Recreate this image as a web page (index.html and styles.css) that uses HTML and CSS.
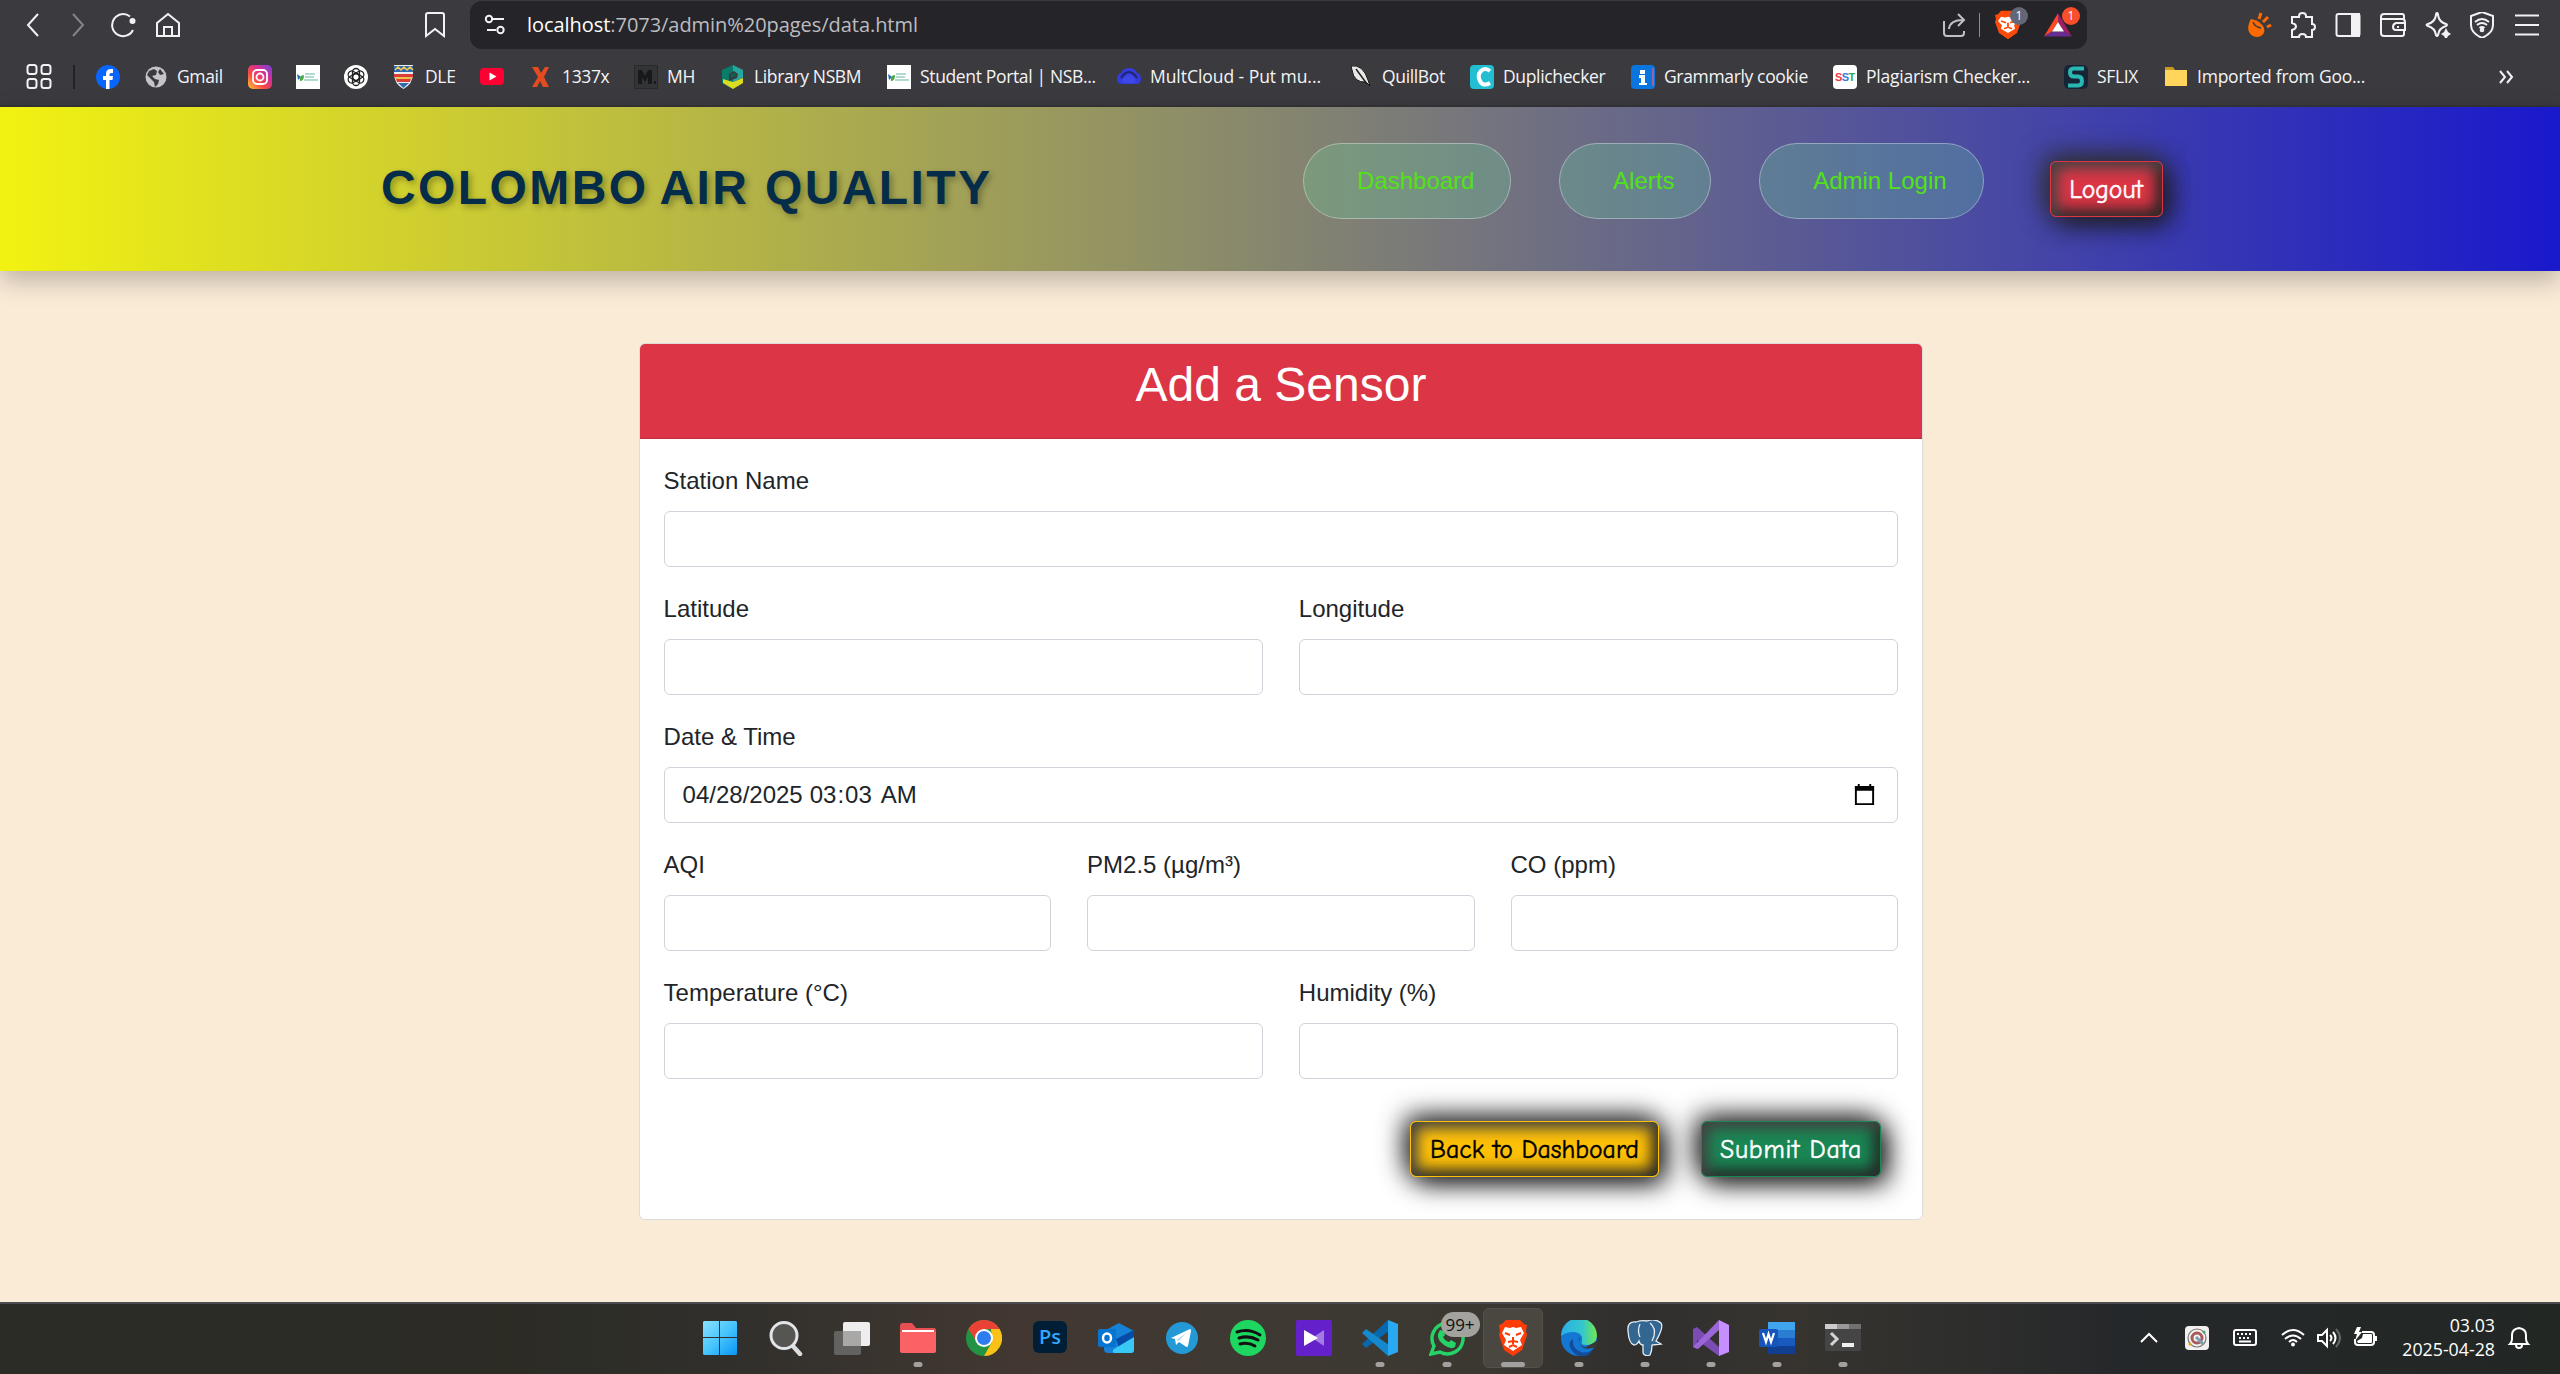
FILE: index.html
```html
<!DOCTYPE html>
<html lang="en">
<head>
<meta charset="utf-8">
<title>Add a Sensor</title>
<link rel="stylesheet" href="styles.css">
</head>
<body>
<div class="browser">
  <div class="toolbar">
    <svg class="ic" viewBox="0 0 26 26"><path d="M18 2 8 13l10 11"/></svg>
    <svg class="ic dim" viewBox="0 0 26 26"><path d="m8 2 10 11L8 24"/></svg>
    <svg class="ic" viewBox="0 0 26 26"><path d="M20 4.500A11 11 0 1 0 23 18"/><circle cx="22.500" cy="9" r="3" fill="#f2f2f5" stroke="none"/></svg>
    <svg class="ic" viewBox="0 0 26 26"><path d="M2 11 13 2l11 9v13H2zM9 24v-9h8v9"/></svg>
    <svg class="ic" viewBox="0 0 26 26"><path d="M4 3q0-2 2-2h14q2 0 2 2v21l-9-7-9 7z"/></svg>
    <div class="address">
      <svg class="ic" viewBox="0 0 26 26"><circle cx="7" cy="7" r="3.200"/><path d="M10.500 7H22M5 18h9"/><circle cx="18.500" cy="18" r="3.200"/></svg>
      <div class="url">localhost<span>:7073/admin%20pages/data.html</span></div>
      <svg class="ic share" viewBox="0 0 26 26"><path d="M2 9v12q0 3 3 3h14q3 0 3-3v-2M7 17q1-9 14-9M16 2l6 6-6 6"/></svg>
      <i class="rule"></i>
      <div class="badged"><svg class="big" preserveAspectRatio="none" viewBox="0 0 30 36"><path fill="#fb4a0a" d="m8 2 14 0 3 4 3 1-1 5 1 3-4 13-9 7-9-7L2 15l1-3-1-5 3-1z"/><path fill="#fff" d="m8 9 4 1 3-1 3 1 4-1 3 5-4 5 1 4-7 5-7-5 1-4-4-5z"/><path d="m8 14 5 2M22 14l-5 2M15 16v6M11 23l4-2 4 2" stroke="#fb4a0a" stroke-width="1.800" fill="none"/></svg><b>1</b></div>
      <div class="badged bat"><svg class="big" preserveAspectRatio="none" viewBox="0 0 30 36"><path fill="#ff4724" d="M15 5 1 32l8-6 6-11z"/><path fill="#9e1f63" d="m15 5 14 27-8-6-6-11z"/><path fill="#662d91" d="M1 32h28l-8-6H9z"/><path fill="#fff" d="m15 15 6 11H9z"/></svg><b>1</b></div>
    </div>
    <svg class="ic" viewBox="0 0 26 26"><g fill="#ff6a00" stroke="none"><path d="M4 7q10 2 13 9c2 7-5 11-11 8S0 14 4 7z"/></g><path d="M6 10q2 5 8 6" stroke="#3b3a3f" stroke-width="1.500"/><path d="m14 1-2 6M21 5l-5 5M24 13l-4 2" stroke="#ff6a00" stroke-width="3"/></svg>
    <svg class="ic" viewBox="0 0 26 26"><path d="M2 5h7V4q0-3 3.500-3T16 4v1h6v7q3 0 3 3t-3 3v7h-6q0-3-3.500-3T9 25H2v-7q4-1 4-3.500T2 11z"/></svg>
    <svg class="ic" viewBox="0 0 26 26"><rect x="1.500" y="2" width="23" height="22" rx="2"/><path d="M17 2h7v22h-7z" fill="#f2f2f5"/></svg>
    <svg class="ic" viewBox="0 0 26 26"><path d="M24 7V4q0-2-2-2H4Q1 2 1 5v16q0 3 3 3h18q2 0 2-2v-4M2 7h20q3 0 3 3v8h-9q-3 0-3-3t3-4h9M17 15h2"/></svg>
    <svg class="ic" viewBox="0 0 26 26"><path d="M12 1q1 0 1 2 1 7 8 9 2 1 0 2-7 2-8 9-1 2-2 0-1-7-8-9-3-1 0-2 7-2 8-9 0-2 1-2z"/><path d="m21 16 2 4 3 2-3 2-2 4-2-4-3-2 3-2z" fill="#f2f2f5" stroke="none"/></svg>
    <svg class="ic" viewBox="0 0 26 26"><path d="m13 0 11 4v9q0 8-11 13Q2 21 2 13V4zM6 10q7-6 14 0M8 13q5-4 10 0M10.500 16q2.500-2 5 0"/><circle cx="13" cy="18" r="1.300"/></svg>
    <svg class="ic" viewBox="0 0 26 26"><path d="M1 3.500h24M1 13h24M1 22.500h24"/></svg>
  </div>
  <div class="bookmarks">
    <a><svg class="ic" viewBox="0 0 26 26"><rect x="1.500" y="1" width="9" height="9" rx="2.500"/><rect x="15.500" y="1" width="9" height="9" rx="2.500"/><rect x="1.500" y="15" width="9" height="9" rx="2.500"/><rect x="15.500" y="15" width="9" height="9" rx="2.500"/></svg></a>
    <a><i class="rule dark"></i></a>
    <a><svg viewBox="0 0 24 24"><circle cx="12" cy="12" r="12" fill="#0866ff"/><path fill="#fff" d="M10 24v-9H7v-4h3V9q0-5 5-5h2v4h-2q-1.500 0-1.500 1.500V11H17l-.5 4h-3v9z"/></svg></a>
    <a><svg viewBox="0 0 24 24"><circle cx="12" cy="12" r="10.500" fill="#c3c5c9"/><path fill="#3b3a3f" d="m5 6 5-2 3 2-1 4-4 1 3 3 4 1-1 4-3 3-1-5-3-3-4-4zM16 4l4 5-4 1-2-3z"/></svg>Gmail</a>
    <a><svg viewBox="0 0 24 24"><defs><linearGradient id="ig" x1="0" y1="1" x2="1" y2="0"><stop offset="0" stop-color="#ffc938"/><stop offset=".35" stop-color="#fb4b45"/><stop offset=".65" stop-color="#d62f91"/><stop offset="1" stop-color="#6b45e8"/></linearGradient></defs><rect width="24" height="24" rx="5" fill="url(#ig)"/><rect x="5" y="5" width="14" height="14" rx="4" fill="none" stroke="#fff" stroke-width="1.800"/><circle cx="12" cy="12" r="3.500" fill="none" stroke="#fff" stroke-width="1.800"/></svg></a>
    <a><svg viewBox="0 0 24 24"><path fill="#fff" d="M0 0h24v24H0z"/><path fill="#1f6eb5" d="m1 9 4 3-3 3z"/><path fill="#49a942" d="M4 16q-1-6 4-6 0 6-4 6z"/><path d="M9 9h10M9 12h9M8 15h14" stroke="#68b5a3" stroke-width="1.200"/></svg></a>
    <a><svg viewBox="0 0 24 24"><circle cx="12" cy="12" r="12" fill="#fff"/><g fill="none" stroke="#222" stroke-width="1.300"><rect x="8.500" y="3.500" width="7" height="12" rx="3.500"/><rect x="8.500" y="3.500" width="7" height="12" rx="3.500" transform="rotate(60 12 12)"/><rect x="8.500" y="3.500" width="7" height="12" rx="3.500" transform="rotate(120 12 12)"/><rect x="8.500" y="3.500" width="7" height="12" rx="3.500" transform="rotate(180 12 12)"/><rect x="8.500" y="3.500" width="7" height="12" rx="3.500" transform="rotate(240 12 12)"/><rect x="8.500" y="3.500" width="7" height="12" rx="3.500" transform="rotate(300 12 12)"/></g></svg></a>
    <a><svg viewBox="0 0 24 24"><path fill="#e9edf4" d="M2 0h19v8q0 11-9.500 16Q2 19 2 8z"/><path fill="#2f69ae" d="M2 1h19v6H2z"/><path fill="#d93f36" d="M2 9h19v3H2zM4 14h15l-1 3H5z"/><path fill="#edc34b" d="M3 12h17v2H3z"/><path fill="#2f69ae" d="M6 18h11l-5.500 5z"/><path d="M3 5l3-3 3 3 3-3 3 3 3-3 3 3" fill="none" stroke="#f5ca53" stroke-width="1.500"/></svg>DLE</a>
    <a><svg viewBox="0 0 24 24"><rect y="3" width="24" height="17" rx="4" fill="#ff0033"/><path fill="#fff" d="m9.500 7.500 7 4-7 4z"/></svg></a>
    <a><svg viewBox="0 0 24 24"><path fill="#e44b20" d="M3 2h6l3 6 4-6h4l-5 10 5 10h-6l-3-6-3 6H3l6-10z"/></svg>1337x</a>
    <a><svg viewBox="0 0 24 24"><path fill="#333435" stroke="#29292b" d="M.5.500h23v23H.5z"/><path fill="#17191b" d="M4 19V5h4l3 6 3-6h4v14h-4v-7l-3 5-3-5v7zM20 16h2v3h-2z"/></svg>MH</a>
    <a><svg viewBox="0 0 24 24"><path fill="#087b69" d="M1 5 12 0v24L1 18z"/><path fill="#27a6a0" d="m12 0 10 5v8l-10 4z"/><path fill="#d9dc20" d="m2 14 10 3 10-4v5l-10 6-10-6z"/><path fill="#3b3a3f" d="m8 9 5-3 4 3-1 4-8 3z"/><path fill="#096356" d="m10 9 4-1 1 3-5 2z"/></svg>Library NSBM</a>
    <a><svg viewBox="0 0 24 24"><path fill="#fff" d="M0 0h24v24H0z"/><path fill="#1f6eb5" d="m1 9 4 3-3 3z"/><path fill="#49a942" d="M4 16q-1-6 4-6 0 6-4 6z"/><path d="M9 9h10M9 12h9M8 15h14" stroke="#68b5a3" stroke-width="1.200"/></svg>Student Portal | NSB...</a>
    <a class="wide"><svg viewBox="0 0 24 24"><path fill="#343cdb" d="M5 19q-5 0-5-5t4-6q2-5 8-5t8 5q4 1 4 6t-5 5z"/><path d="M4 13q4-6 8-6t8 6" fill="none" stroke="#22246c" stroke-width="2"/><path fill="#3e48e6" d="M5 17q2-7 7-7t7 7q-7 3-14 0z"/></svg>MultCloud - Put mu...</a>
    <a><svg viewBox="0 0 24 24"><path fill="#e9e9e6" stroke="#171717" d="M2 1q12-2 17 14l2 6-4-4Q5 18 3 5z"/><path d="m7 4 11 15" stroke="#222" stroke-width="1.500"/></svg>QuillBot</a>
    <a><svg viewBox="0 0 24 24"><rect width="24" height="24" rx="4" fill="#22bfd2"/><path d="M20 6q-5-4-9 0T10 16t10 2" fill="none" stroke="#fff" stroke-width="4"/></svg>Duplichecker</a>
    <a><svg viewBox="0 0 24 24"><rect width="24" height="24" rx="4" fill="#0875e1"/><path d="M22 3v18" stroke="#d35c81" stroke-width="1.500"/><path fill="#fff" d="M9 5h5v4H9zM8 10h6v8h2v2H8v-2h2v-5H8z"/></svg>Grammarly cookie</a>
    <a class="mid"><svg viewBox="0 0 24 24"><rect width="24" height="24" rx="4" fill="#fff"/><text x="2" y="16" font-size="11" font-weight="700" textLength="20" font-family="Liberation Sans"><tspan fill="#ef3944">S</tspan><tspan fill="#3878d6">S</tspan><tspan fill="#31a466">T</tspan></text></svg>Plagiarism Checker...</a>
    <a><svg viewBox="0 0 24 24"><rect width="24" height="24" rx="5" fill="#172436"/><path d="M20 3.500H9.500Q6 3.500 6 7.500T10 11.500h4q4 0 4 4.500t-4 4.500H4" fill="none" stroke="#28b7b1" stroke-width="4"/></svg>SFLIX</a>
    <a class="mid"><svg viewBox="0 0 24 24"><path fill="#c99722" d="M1 2h8l2 3h12v16H1z"/><path fill="#ffd55b" d="M1 5h22v15q0 1-1 1H2q-1 0-1-1z"/></svg>Imported from Goo...</a>
    <a><svg class="ic" viewBox="0 0 26 26"><path d="m1 7 5 6-5 6M8 7l5 6-5 6"/></svg></a>
  </div>
</div>

<header class="site">
  <h1><span>COLOMBO</span> AIR QUALITY</h1>
  <nav><a>Dashboard</a><a>Alerts</a><a>Admin Login</a></nav>
  <button class="btn logout">Logout</button>
</header>

<main>
  <section class="card">
    <h2>Add a Sensor</h2>
    <form>
      <label>Station Name<input></label>
      <div class="row"><label>Latitude<input></label><label>Longitude<input></label></div>
      <label>Date &amp; Time
        <span class="date"><span>04/28/2025</span><span class="time">03<span>:</span>03</span><span>AM</span>
          <svg viewBox="0 0 24 24"><path d="M3 4h18v18H3z" fill="none" stroke="#000" stroke-width="2"/><path d="M2 3h20v5H2zM5 1h2v3H5zM17 1h2v3h-2z"/></svg></span></label>
      <div class="row"><label>AQI<input></label><label>PM2.5 (µg/m³)<input></label><label>CO (ppm)<input></label></div>
      <div class="row"><label>Temperature (°C)<input></label><label>Humidity (%)<input></label></div>
      <div class="actions"><button type="button" class="btn back">Back to Dashboard</button><button type="button" class="btn submit">Submit Data</button></div>
    </form>
  </section>
</main>

<footer class="taskbar">
  <div class="apps">
    <div><svg viewBox="0 0 36 36"><defs><linearGradient id="win" x1="0" y1="0" x2="1" y2="1"><stop offset="0" stop-color="#8be0ff"/><stop offset=".5" stop-color="#48c5fb"/><stop offset="1" stop-color="#0995f7"/></linearGradient></defs><path fill="url(#win)" d="M2 1h15v16H1V2zM18 1h16l1 1v15H18zM1 18h16v17H2l-1-1zM18 18h17v16l-1 1H18z"/></svg></div>
    <div><svg viewBox="0 0 36 36"><path d="m24 25 8 9" stroke="#d9dde0" stroke-width="4.500" stroke-linecap="round"/><circle cx="16" cy="15.500" r="13" fill="#575551" stroke="#e2e5e8" stroke-width="3"/></svg></div>
    <div><svg viewBox="0 0 36 36"><rect y="11" width="27" height="24" rx="2" fill="#636261"/><rect x="9" y="2" width="27" height="24" rx="2" fill="#eee"/><path d="M9 11h18v15H9z" fill="#a9a8a7"/></svg></div>
    <div><svg viewBox="0 0 36 36"><path fill="#e84f53" d="M0 6q0-3 3-3h9l4 5h18q2 0 2 2v20H0z"/><path fill="#fff" d="M2 10h32v4H2z"/><path fill="#fa6265" d="M0 12h36v19q0 2-2 2H2q-2 0-2-2z"/></svg><i></i></div>
    <div><svg viewBox="0 0 36 36"><circle cx="18" cy="18" r="18" fill="#229342"/><path fill="#ea4335" d="M2.400 9A18 18 0 0 1 33.600 9H18l-7 13.500z"/><path fill="#fbc116" d="M33.600 9A18 18 0 0 1 18 36l8-14-1-13z"/><circle cx="18" cy="18" r="9" fill="#fff"/><circle cx="18" cy="18" r="7" fill="#2e7cf0"/></svg></div>
    <div><svg viewBox="0 0 36 36"><rect x="1" y="1" width="34" height="32" rx="6" fill="#001e36"/><text x="7" y="24" font-family="Open Sans" font-weight="600" font-size="20" textLength="22" lengthAdjust="spacingAndGlyphs" fill="#31a8ff">Ps</text></svg></div>
    <div><svg viewBox="0 0 36 36"><path fill="#1682d7" d="m6 11 15-8 15 8v19q0 3-3 3H10q-4 0-4-4z"/><path fill="#064ba8" d="m18 19 18-9v9l-15 9z"/><path fill="#38c8f5" d="m36 17-20 12q-3 4 1 4h16q3 0 3-3z"/><rect y="9" width="18" height="18" rx="2" fill="#0874d1"/><ellipse cx="9" cy="18" rx="4" ry="4.500" fill="none" stroke="#fff" stroke-width="2.500"/></svg></div>
    <div><svg viewBox="0 0 36 36"><circle cx="18" cy="18" r="16" fill="#239ad6"/><path fill="#fff" d="m7 18 19-9q1 0 1 2l-3 15q-1 2-3 0l-6-4-3 3-1-6z"/><path d="m12 20 10-7-7 8" fill="#bfdcea"/></svg></div>
    <div><svg viewBox="0 0 36 36"><circle cx="18" cy="18" r="18" fill="#1ed760"/><path d="M7 12q12-4 23 3M9 18q10-3 19 2M10 24q8-2 15 2" fill="none" stroke="#111" stroke-width="3" stroke-linecap="round"/></svg></div>
    <div><svg viewBox="0 0 36 36"><rect width="36" height="36" rx="2" fill="#6420ca"/><path fill="#a37be1" d="m28 10-12 8 12 8z"/><path fill="#fff" d="m8 10 14 8-14 8z"/></svg></div>
    <div><svg viewBox="0 0 36 36"><path fill="#0868ad" d="m26 0 1 11L4 28 0 24z"/><path fill="#1689ce" d="m4 9 23 16-1 11L0 13z"/><path fill="#2ba8f2" d="m26 0 10 4v28l-10 4z"/></svg><i></i></div>
    <div><svg viewBox="0 0 36 36"><path d="M2 34 5 26A15.500 15.500 0 1 1 11 32z" fill="none" stroke="#25d366" stroke-width="3.500"/><path fill="#25d366" d="m11 10 4 1 1 4-2 2q2 4 6 5l2-2 5 3-1 4q-4 3-11-2T9 14z"/></svg><b>99+</b><i></i></div>
    <div class="active"><svg viewBox="0 0 36 36"><path fill="#ff3b08" d="m11 0 14 0 4 4 3 1-1 6 1 4-5 15-9 6-9-6L4 15l1-4-1-6 3-1z"/><path fill="#fff" d="m10 7 5 1 3-1 3 1 5-1 3 6-4 7 2 5-9 6-9-6 2-5-4-7z"/><path d="m10 13 5 2M26 13l-5 2M18 17v7M13 22l5-1 5 1M14 27l4-2 4 2" stroke="#ff3b08" stroke-width="2" fill="none"/></svg><i></i></div>
    <div><svg viewBox="0 0 36 36"><defs><linearGradient id="ed"><stop offset="0" stop-color="#2aaeea"/><stop offset=".6" stop-color="#35c7cb"/><stop offset="1" stop-color="#70e94c"/></linearGradient></defs><circle cx="18" cy="18" r="18" fill="#1477d4"/><path fill="url(#ed)" d="M0 16a18 18 0 0 1 36 0q-1 9-11 9-6 0-4-4 1-8-8-9-8 0-13 4z"/><path fill="#124d9c" d="M12 19q-1 10 8 13 7 2 13-4-7 13-19 6-10-10-2-15z"/><path fill="#393731" d="M20 16q-5 8 3 11 6 1 13-3v2q-9 5-15 1-6-6-1-11zM36 21v5l-3 2-8-1z"/></svg><i></i></div>
    <div><svg viewBox="0 0 36 36"><path fill="#336791" stroke="#e6edf2" stroke-width="1.300" d="M9 2Q0 1 1 11q1 13 6 14 3 0 5-4 1 4 4 4v8q2 4 7 2 2-4 2-10l9-1-5-3q8-14 5-18-6-5-14-2Q15 0 9 2z"/><path d="M13 4q-3 7 0 13M23 3q6 5 4 13l-2 5" fill="none" stroke="#e6edf2" stroke-width="1.300"/></svg><i></i></div>
    <div><svg viewBox="0 0 36 36"><path fill="#7b4cb4" d="m0 9 4-2 22 20v9L4 20v9l-4-2z"/><path fill="#9b67d8" d="m0 27 26-27v10L5 29z"/><path fill="#c78eff" d="m26 0 10 5v27l-10 4z"/></svg><i></i></div>
    <div><svg viewBox="0 0 36 36"><path fill="#41a5ee" d="M9 2h27v9H9z"/><path fill="#2b7cd3" d="M9 10h27v9H9z"/><path fill="#185abd" d="M9 18h27v9H9z"/><path fill="#103f91" d="M9 26h27v8H9z"/><rect y="9" width="19" height="18" rx="2" fill="#1554ba"/><path d="m4 13 3 9 2.500-8 2.500 8 3-9" fill="none" stroke="#fff" stroke-width="2.200"/></svg><i></i></div>
    <div><svg viewBox="0 0 36 36"><rect y="4" width="36" height="27" rx="2" fill="#454545"/><path fill="#ccc" d="M0 4h12v5H0z"/><path fill="#999" d="M12 4h12v5H12z"/><path fill="#717171" d="M24 4h12v5H24z"/><path d="m6 13 6 6-6 6" fill="none" stroke="#d4d4d4" stroke-width="3"/><path d="M17 25h12" stroke="#f0f0f0" stroke-width="4"/></svg><i></i></div>
  </div>
  <div class="tray">
    <svg viewBox="0 0 24 24"><path d="m4 16 8-8 8 8"/></svg>
    <svg viewBox="0 0 24 24"><rect width="24" height="24" rx="4" fill="#f3f0ef" stroke="none"/><circle cx="12" cy="12" r="9" stroke="#777" stroke-width="1.200"/><circle cx="12" cy="12" r="5" stroke="#a85a5a" stroke-width="3"/><path d="m11 11 7 7" stroke="#789eb3" stroke-width="3"/><circle cx="19" cy="6" r="1.500" fill="#45a867" stroke="none"/><circle cx="5" cy="18" r="1.500" fill="#dba320" stroke="none"/></svg>
    <svg viewBox="0 0 24 24"><rect x="1" y="4" width="22" height="15" rx="2"/><path d="M4 8h2m2 0h2m2 0h2m2 0h2M6 12h2m2 0h2m2 0h2M6 15.500h12" stroke-width="1.800"/></svg>
    <svg viewBox="0 0 24 24"><path d="M1 9q11-10 22 0M4 13q8-7 16 0M8 16q4-4 8 0"/><circle cx="12" cy="18.500" r="2" fill="#fff" stroke="none"/></svg>
    <svg viewBox="0 0 24 24"><path d="M1 9h4l5-5v16l-5-5H1zM13 9q3 3 0 6M16 6q5 6 0 12"/><path d="M19 3q8 9 0 18" stroke="#666"/></svg>
    <svg viewBox="0 0 24 24"><path d="M9 6h9q3 0 3 3v7q0 3-3 3H5q-3 0-3-3v-3"/><path fill="#fff" stroke="none" d="M10 8h8q1 0 1 1v7q0 1-1 1H5l-1-2 5-3zM21 10h3v5h-3zM4 1 1 8h3L2 15l7-9H6l2-5z"/></svg>
    <div class="clock">03.03<br>2025-04-28</div>
    <svg viewBox="0 0 24 24"><path d="M3 18q2-2 2-5V9q0-6 7-7 7 1 7 7v4q0 3 2 5zM9 19q0 3 3 3t3-3"/></svg>
  </div>
</footer>
</body>
</html>
```
FILE: styles.css
```css
* { box-sizing: border-box; }
body { margin: 0; width: 2560px; height: 1374px; overflow: hidden; display: flex; flex-direction: column; background: #faebd7; font: 24px/1.5 "Liberation Sans", Arial, sans-serif; color: #212529; }
svg { display: block; flex: none; }

/* browser chrome */
.browser { height: 107px; background: #3b3a3f; border-bottom: 2px solid #343337; color: #f4f4f6; font-family: "Open Sans", "Noto Sans", sans-serif; }
.ic { width: 26px; height: 26px; fill: none; stroke: #f2f2f5; stroke-width: 2; }
.dim { stroke: #85848a; }
.toolbar { display: grid; grid-template-columns: 45px 45px 45px 267px 48px 1777px 43px 45px 45px 45px 44px 45px 40px; height: 49px; padding-left: 20px; align-items: center; }
.address { display: flex; align-items: center; width: 1617px; height: 48px; border-radius: 12px; background: #252429; padding-left: 12px; }
.url { flex: 1; padding-left: 19px; font-size: 20px; letter-spacing: -.05px; white-space: nowrap; color: #fff; }
.url span { color: #bcbcc0; }
.share { margin-right: 11px; stroke: #bfbfc4; }
.rule { display: block; width: 1px; height: 24px; background: #8d8c91; }
.rule.dark { width: 2px; background: #222126; }
.badged { position: relative; margin-left: 13px; width: 30px; }
.badged.bat { margin: 0 14px 0 20px; }
.big { width: 30px; height: 31px; }
.badged b { position: absolute; left: 17px; top: -2px; width: 18px; height: 18px; border-radius: 9px; background: #636674; font-size: 12px; font-weight: 400; line-height: 18px; text-align: center; color: #fff; }
.badged.bat b { background: #fb4f2c; left: 19px; }
.bookmarks { display: grid; grid-template-columns: 47px 23px 48px 104px 48px 48px 48px 88px 49px 105px 87px 166px 230px 232px 121px 161px 202px 231px 100px 335px 40px; height: 55px; padding-left: 26px; align-items: center; }
.bookmarks a { display: flex; align-items: center; gap: 9px; font-size: 17.500px; letter-spacing: -.35px; white-space: nowrap; height: 30px; }
.bookmarks .wide { letter-spacing: -.05px; }
.bookmarks .mid { letter-spacing: -.23px; }
.bookmarks svg { width: 24px; height: 24px; }
.bookmarks .ic { width: 26px; height: 26px; }

/* site header */
.site { position: relative; height: 164px; display: flex; align-items: flex-start; padding-left: 381px; background: linear-gradient(90deg, #f2f211, #1919cd); box-shadow: 0 9px 24px rgba(0,0,0,.25); }
.site h1 { margin: 45px 0 0; width: 922px; font-size: 48px; line-height: 72px; letter-spacing: 2.400px; color: #052c49; text-shadow: 3px 3px 6px rgba(0,0,0,.3); white-space: nowrap; }
.site h1 span { margin-right: -3px; }
nav { display: flex; gap: 47.700px; margin-top: 36px; }
nav a { height: 76px; padding: 19px 36px 0 53px; border: 1px solid rgba(255,255,255,.35); border-radius: 38px; background: rgba(103,219,159,.25); color: #52e314; white-space: nowrap; }

/* buttons */
.btn { height: 56px; padding: 2px 0 0; border: 1px solid; border-radius: 6px; font: 500 25.700px/1.5 "Comic Sans MS", "Comic Neue", "Open Sans", sans-serif; color: #fff; -webkit-text-stroke: .5px; white-space: nowrap; box-shadow: -5px -5px 27px #333, 6px 6px 27px #111, inset 6px 6px 15px #444, inset -6px -6px 15px #222; }
.logout { margin: 54px 0 0 66px; width: 113px; background: #dc3545; border-color: #dc3545; }
.back { width: 249px; background: #ffc107; border-color: #ffc107; color: #000; }
.submit { width: 180px; background: #198754; border-color: #198754; letter-spacing: .8px; }

/* form */
main { flex: 1; padding: 72px 0 0 639px; }
.card { width: 1284px; height: 877px; background: #fff; border: 1px solid #dcdcda; border-radius: 6px; overflow: hidden; }
.card h2 { margin: 0; height: 95px; padding-top: 12px; background: #dc3545; border-bottom: 1px solid #c0303f; color: #fff; font-size: 48px; font-weight: 400; line-height: 58px; text-align: center; }
form { display: flex; flex-direction: column; gap: 24px; padding: 24px 24px 24px 23.600px; }
.row { display: flex; gap: 36px; }
label { flex: 1 1 0; min-width: 0; display: flex; flex-direction: column; gap: 12px; }
input, .date { width: 100%; height: 56px; border: 1px solid #ced4da; border-radius: 6px; background: #fff; }
.date { display: flex; align-items: center; gap: 7px; padding: 0 21px 0 18px; }
.date .time { margin-right: 2px; }
.time span { margin: 0 1px; }
.date svg { width: 23px; height: 23px; margin: -2px 0 0 auto; }
.actions { display: flex; justify-content: flex-end; gap: 42px; padding: 18px 17px; }

/* taskbar */
.taskbar { height: 72px; display: flex; align-items: center; border-top: 2px solid #4c4b4d; background: linear-gradient(90deg, #2b2c25 0%, #2c2c25 20%, #302f2b 28%, #423831 40%, #3e3933 50%, #3b3731 58%, #302f2e 64%, #37342f 70%, #25282a 83%, #222724 100%); padding: 0 0 2px 690px; color: #fff; font-family: "Open Sans", sans-serif; }
.apps { display: flex; gap: 6.050px; width: 1447px; }
.apps div { position: relative; width: 60px; height: 60px; padding: 12px 12px 0; border-radius: 6px; }
.apps svg { width: 36px; height: 36px; }
.apps .active { background: #4a4740; border: 1px solid #54514b; padding: 11px 11px 0; }
.apps i { position: absolute; left: 50%; bottom: 1px; width: 9px; height: 5px; border-radius: 3px; background: #a3a19f; transform: translateX(-50%); }
.apps .active i { width: 24px; bottom: 0; }
.apps b { position: absolute; left: 24px; top: 4px; width: 39px; height: 25px; border-radius: 13px; background: #a3a29d; color: #111; font-size: 17px; font-weight: 400; line-height: 25px; text-align: center; }
.tray { display: grid; grid-template-columns: 48px 48px 48px 36px 36px 42px 112px 30px; align-items: center; }
.tray svg { width: 24px; height: 24px; fill: none; stroke: #fff; stroke-width: 2; }
.clock { width: 100px; font-size: 17.800px; line-height: 24px; text-align: right; margin-top: -2px; }
```
